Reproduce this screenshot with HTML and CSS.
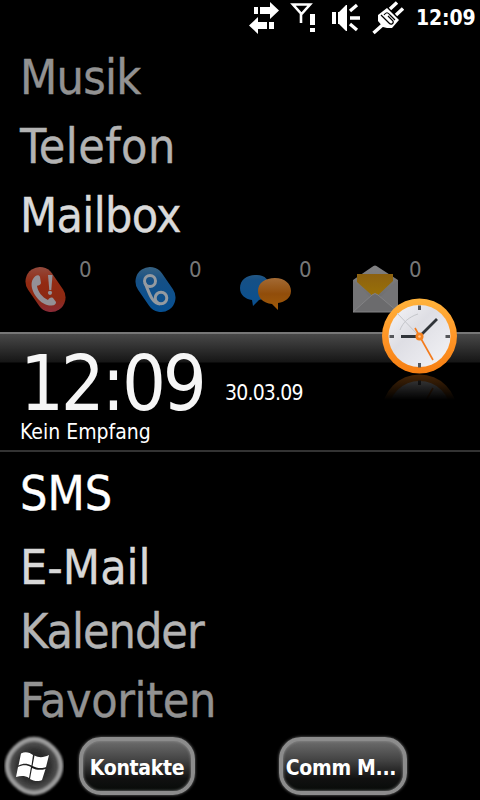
FILE: index.html
```html
<!DOCTYPE html>
<html lang="de">
<head>
<meta charset="UTF-8" />
<meta name="viewport" content="width=device-width, initial-scale=1" />
<title>Heute</title>
<link rel="stylesheet" href="styles.css">
</head>
<body>
<header class="statusbar">
  <svg class="status-icons" width="170" height="36" viewBox="0 0 170 36" fill="#fff">
    <!-- sync arrows -->
    <path d="M14 7h4v7h-4zM20 7h10V2l9 8.500-9 8.500v-5H20zM29 22h5v7h-5zM27 22H18v-5l-9 8.500 9 8.500v-5h9z"/>
    <!-- no signal -->
    <path d="M53 4.500h17l-8 9h-1zM61 12v11" fill="none" stroke="#fff" stroke-width="2.600"/>
    <path d="M70 14h5v11h-5zM70 28h5v4h-5z"/>
    <!-- speaker -->
    <path d="M92 12h4v12h-4zM98 12h1l7-7h1v26h-1l-7-7h-1z"/>
    <path d="M110 11l7-6M110 18h10M110 24l7 6" stroke="#fff" stroke-width="3.300" fill="none"/>
    <!-- power plug -->
    <path d="M133.500 33l9-8M150 9l7-6.500M156 15l7-6.500" stroke="#fff" stroke-width="3.500" fill="none"/>
    <path d="M138 15l9-7 12 12-7 8h-5l-4-1-5-6z"/>
    <path d="M144 15c2-3 4-3 6 0l5 5M141 15l8 8c2 2 5 1 4-2l-5-5" stroke="#000" stroke-width="1.200" fill="none"/>
  </svg>
  <span class="status-time">12:09</span>
</header>

<nav class="menu menu-top">
  <div class="item musik">Musik</div>
  <div class="item telefon">Telefon</div>
  <div class="item mailbox">Mailbox</div>
</nav>

<div class="counters">
  <div class="counter">
    <svg width="55" height="60" viewBox="0 0 55 60">
      <defs>
        <linearGradient id="red" gradientUnits="userSpaceOnUse" x1="0" y1="7" x2="0" y2="52"><stop offset="0" stop-color="#934a3d"/><stop offset=".35" stop-color="#932a12"/><stop offset=".7" stop-color="#8c2912"/><stop offset="1" stop-color="#8a2b38"/></linearGradient>
      </defs>
      <path d="M20 21.500L31 37.500" stroke="url(#red)" stroke-width="29" stroke-linecap="round"/>
      <path d="M13 19C15 15 19 14 20 17L21 23C20 26 18 25 17 26C18 32 22 37 28 40C29 38 31 37 33 38L36 42C36 46 31 46 27 45C17 42 8 27 13 19z" fill="#949096"/>
      <path d="M28 15h4.500l-1.200 15h-2z" fill="#949096"/><circle cx="30" cy="32.800" r="2.100" fill="#949096"/>
    </svg>
    <span class="count">0</span>
  </div>
  <div class="counter">
    <svg width="55" height="60" viewBox="0 0 55 60">
      <defs>
        <linearGradient id="blue" gradientUnits="userSpaceOnUse" x1="0" y1="7" x2="0" y2="52"><stop offset="0" stop-color="#376282"/><stop offset=".3" stop-color="#155086"/><stop offset="1" stop-color="#075092"/></linearGradient>
      </defs>
      <path d="M20 21.500L31 37.500" stroke="url(#blue)" stroke-width="29" stroke-linecap="round"/>
      <g fill="none" stroke="#949aa0" stroke-width="3"><circle cx="20" cy="21" r="5.500"/><circle cx="31" cy="38" r="5.800"/><path d="M15 23c4 9 7 21 15 21"/></g>
    </svg>
    <span class="count">0</span>
  </div>
  <div class="counter">
    <svg width="55" height="60" viewBox="0 0 55 60">
      <defs>
        <linearGradient id="orange" x1="0" y1="0" x2="0" y2="1"><stop offset="0" stop-color="#a36a34"/><stop offset=".5" stop-color="#914d0a"/><stop offset="1" stop-color="#a05b0a"/></linearGradient>
      </defs>
      <path d="M15 15C24 14 30 20 30 27C30 36 24 39 19 40L13 46L12 40C5 39 0 35 0 28C0 20 7 15 15 15z" fill="url(#blue)"/>
      <path d="M35 18C45 18 51 24 51 31C51 38 45 42 38 43L38 50L32 44C23 43 18 38 18 31C18 23 25 18 35 18z" fill="url(#orange)"/>
    </svg>
    <span class="count">0</span>
  </div>
  <div class="counter">
    <svg width="55" height="60" viewBox="0 0 55 60">
      <defs>
        <linearGradient id="paper" x1="0" y1="0" x2="0" y2="1"><stop offset="0" stop-color="#818183"/><stop offset="1" stop-color="#666668"/></linearGradient>
        <linearGradient id="gold" x1="0" y1="0" x2="0" y2="1"><stop offset="0" stop-color="#8c6110"/><stop offset="1" stop-color="#9b7206"/></linearGradient>
      </defs>
      <path d="M3 20L22 7Q25 4 28 7L48 20V52H3z" fill="url(#paper)"/>
      <path d="M7 14H43V21L25 38L7 22z" fill="url(#gold)"/>
      <path d="M3 20L20 37L25 34L30 37L48 20V52H3z" fill="#747476"/>
      <path d="M3 52L22 35Q25 32 28 35L48 52z" fill="#6b6b6d" stroke="#828284"/>
    </svg>
    <span class="count">0</span>
  </div>
</div>

<section class="today">
  <div class="today-row">
    <div class="big-time">12:09</div>
    <div class="date">30.03.09</div>
  </div>
  <div class="network">Kein Empfang</div>
  <svg class="clock" width="90" height="120" viewBox="0 0 90 120">
    <defs>
      <linearGradient id="ring" x1="0" y1="0" x2="0" y2="1"><stop offset="0" stop-color="#ffb33b"/><stop offset=".5" stop-color="#ff9627"/><stop offset="1" stop-color="#f67e12"/></linearGradient>
      <linearGradient id="face" x1="0" y1="0" x2="1" y2="1"><stop offset="0" stop-color="#f6f6f9"/><stop offset=".4" stop-color="#dedee4"/><stop offset="1" stop-color="#f4f4f7"/></linearGradient>
      <linearGradient id="fade" gradientUnits="userSpaceOnUse" x1="0" y1="83" x2="0" y2="110"><stop offset="0" stop-color="#fff" stop-opacity=".3"/><stop offset="1" stop-color="#fff" stop-opacity="0"/></linearGradient>
      <mask id="mirror"><rect y="82" width="90" height="38" fill="url(#fade)"/></mask>
      <g id="dial">
        <circle cx="44.500" cy="46" r="37.500" fill="url(#ring)"/>
        <circle cx="44.500" cy="46" r="31" fill="url(#face)"/>
        <path d="M22 23l22 23M25 40c3-8 9-13 18-16" stroke="#c4c6ca" stroke-width="1" fill="none"/>
        <path d="M44.500 15.500v4.500M44.500 73v4.500M14.500 46.500h4.500M70.500 46.500h4.500" stroke="#55575b" stroke-width="3"/>
        <path d="M44.500 46.500H26M44.500 46.500L62 29" stroke="#303439" stroke-width="2.800"/>
        <path d="M40 38L58 70" stroke="#f47b1c" stroke-width="1.600"/>
        <circle cx="44.500" cy="46.500" r="4" fill="#f58220"/><circle cx="44.500" cy="46.500" r="1.300" fill="#ffc48a"/>
      </g>
    </defs>
    <g mask="url(#mirror)"><use href="#dial" transform="translate(0 168) scale(1 -1)"/></g>
    <use href="#dial"/>
  </svg>
</section>

<nav class="menu menu-bottom">
  <div class="item sms">SMS</div>
  <div class="item email">E-Mail</div>
  <div class="item kalender">Kalender</div>
  <div class="item favoriten">Favoriten</div>
</nav>

<footer class="softkeys">
  <svg class="start" width="60" height="62" viewBox="0 0 60 62">
    <defs>
      <radialGradient id="orb"><stop offset="0" stop-color="#161616"/><stop offset=".6" stop-color="#303030"/><stop offset="1" stop-color="#606060"/></radialGradient>
      <filter id="soft" x="-20%" y="-20%" width="140%" height="140%"><feGaussianBlur stdDeviation="0.900"/></filter>
    </defs>
    <path d="M30 4C38 4 43.500 7.500 49 13C54.500 18.500 57 24 57 31C57 38 54.500 43.500 49 49C43.500 54.500 38 58 30 58C22 58 16.500 54.500 11 49C5.500 43.500 3 38 3 31C3 24 5.500 18.500 11 13C16.500 7.500 22 4 30 4z" fill="url(#orb)" stroke="#9c9c9c" stroke-width="4.500" filter="url(#soft)"/>
    <path transform="translate(-3 0)" d="M20 18.500C25 16 29 18 32 20L30.500 30.500C26 28 22 28 17.500 30.500zM33.500 20.500C38 23 43 22.500 48 20L45 32C41 34 35 33 31.500 31zM17 32C22 29.500 26 30 30 32L28 43C24 40.500 20 40.500 15 42zM31 33C35 35 40 35.500 44.500 34L41 45C38 47 32 46 29 44z" fill="#fff"/>
  </svg>
  <button class="softkey left">Kontakte</button>
  <button class="softkey right">Comm M...</button>
</footer>
</body>
</html>
```
FILE: styles.css
```css
body {
  background: #000;
  color: #fff;
  font-family: "DejaVu Sans Condensed", "DejaVu Sans", sans-serif;
  font-stretch: condensed;
  margin: 0;
  width: 480px;
  height: 800px;
  overflow: hidden;
}
.statusbar {
  display: flex;
  height: 36px;
  padding-left: 240px;
}
.status-icons {
  flex: none;
}
.status-time {
  margin-left: 6px;
  font-size: 21px;
  font-weight: bold;
  line-height: 37px;
  letter-spacing: -0.1px;
}
.menu {
  padding-left: 20px;
}
.menu-top {
  padding-top: 7px;
}
.item {
  height: 69px;
  font-size: 48px;
  line-height: 69px;
  letter-spacing: -0.7px;
  white-space: nowrap;
  -webkit-text-stroke: 0.4px currentColor;
}
.musik {
  color: #929292;
}
.telefon {
  color: #b3b3b3;
  letter-spacing: 0.5px;
}
.mailbox {
  color: #dadada;
}
.counters {
  display: flex;
  height: 72px;
  padding: 10px 0 0 20px;
}
.counter {
  display: flex;
  width: 110px;
}
.count {
  margin-left: 4px;
  font-size: 22px;
  line-height: 19px;
  color: #777;
}
.today {
  position: relative;
  box-sizing: border-box;
  height: 120px;
  border-top: 2px solid #777;
  border-bottom: 2px solid #333;
  background: linear-gradient(#484848, #161616 28px, #000 29px);
}
.today-row {
  display: flex;
  height: 85px;
  padding-left: 20px;
}
.big-time {
  width: 205px;
  padding-top: 15px;
  font-size: 77px;
  line-height: 70px;
  letter-spacing: -3.2px;
  color: #f6f6f6;
}
.date {
  font-size: 21px;
  line-height: 119px;
  letter-spacing: -0.8px;
}
.network {
  padding-left: 20px;
  font-size: 21px;
  line-height: 26px;
}
.clock {
  position: absolute;
  left: 375px;
  top: -44px;
}
.menu-bottom {
  padding-top: 7px;
}
.sms {
  height: 74px;
  letter-spacing: 0;
}
.email {
  height: 64px;
  color: #d8d8d8;
  letter-spacing: 0;
}
.kalender {
  color: #b3b3b3;
  letter-spacing: -1px;
}
.favoriten {
  color: #929292;
  letter-spacing: -0.4px;
}
.softkeys {
  display: flex;
  padding-left: 4px;
}
.softkey {
  box-sizing: border-box;
  height: 58px;
  margin-top: 2px;
  padding: 3px 0 0;
  border: 4px solid #8c8c8c;
  border-radius: 22px;
  background: linear-gradient(#6c6c6c, #414141 40%, #111 75%, #080b09);
  box-shadow: 0 0 3px #777, inset 0 0 3px #8c8c8c;
  color: #fff;
  font-family: inherit;
  font-stretch: inherit;
  font-size: 21px;
  font-weight: bold;
  letter-spacing: -0.3px;
}
.left {
  width: 116px;
  margin-left: 15px;
}
.right {
  width: 128px;
  margin-left: 84px;
  padding-right: 4px;
}
```
